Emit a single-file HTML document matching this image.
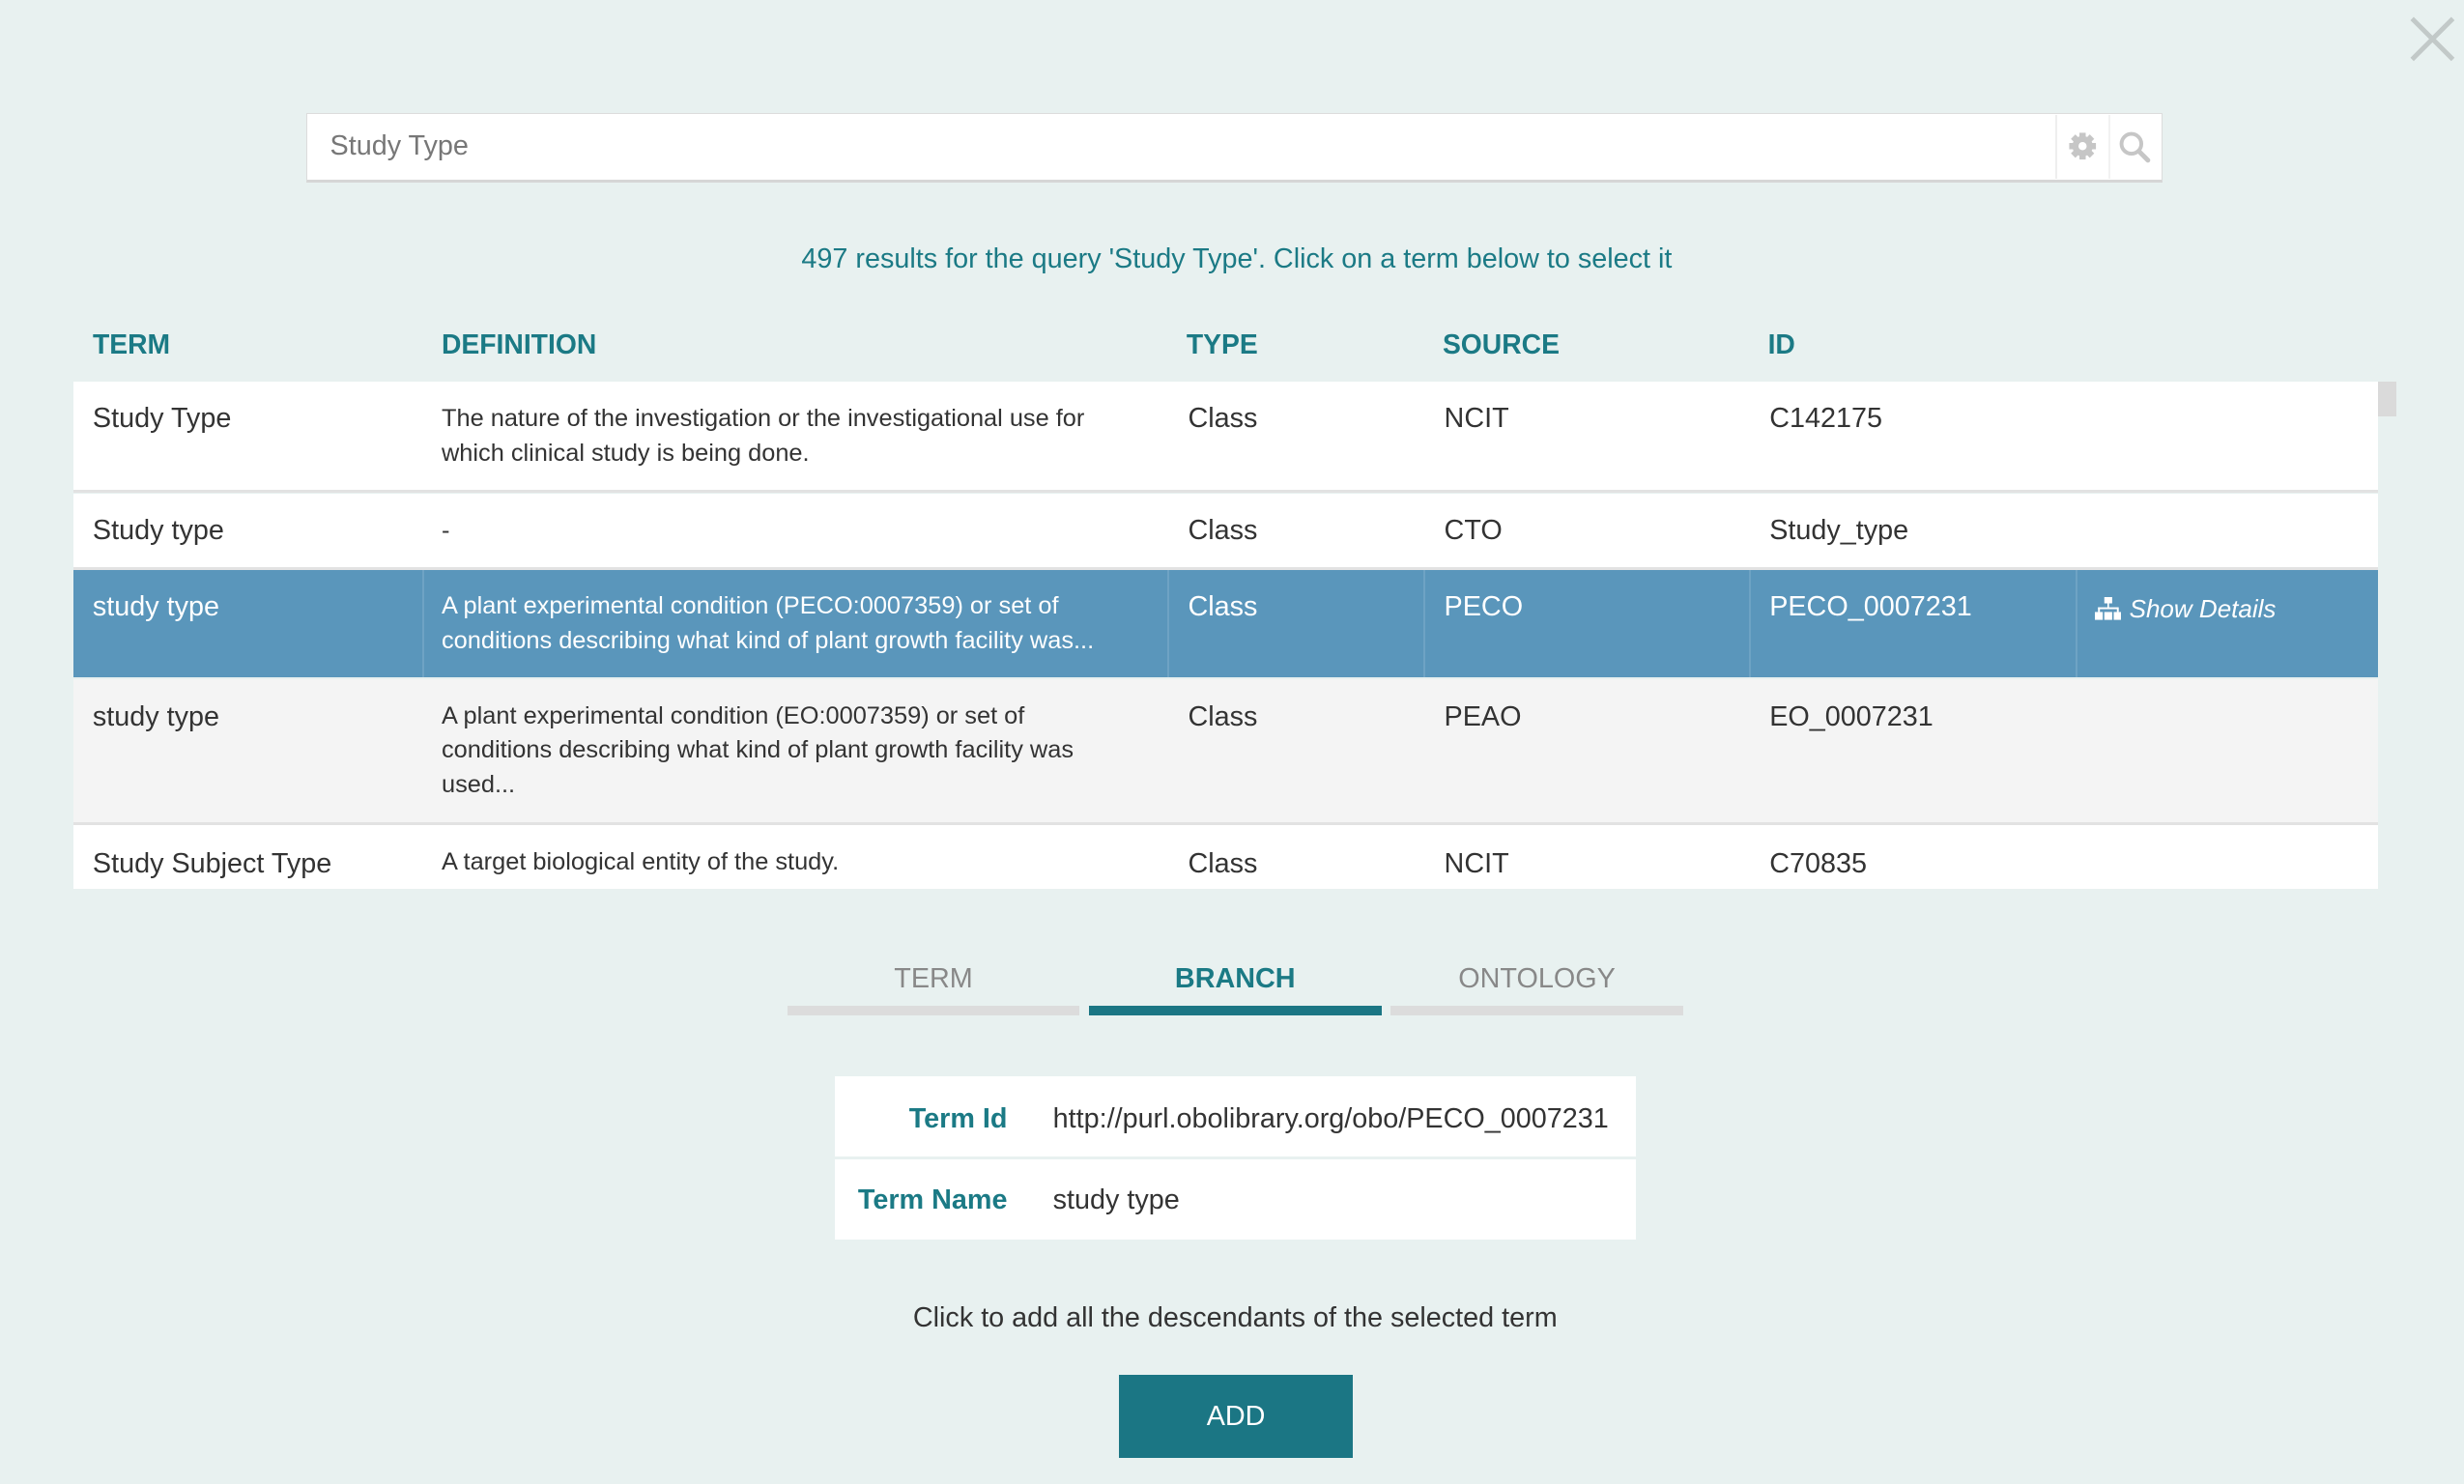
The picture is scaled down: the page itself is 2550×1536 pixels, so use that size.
<!DOCTYPE html>
<html><head><meta charset="utf-8"><style>
html,body{margin:0;padding:0;}
body{width:2550px;height:1536px;overflow:hidden;background:#e8f1f0;font-family:"Liberation Sans",Arial,sans-serif;}
#w{position:absolute;left:0;top:0;width:1568px;height:944px;zoom:1.6263;color:#333;}
.a{position:absolute;}
.h{position:absolute;top:209px;color:#1b7a85;font-weight:bold;font-size:17.4px;}
.row{position:absolute;left:47px;width:1466px;}
.c{position:absolute;font-size:17.7px;line-height:22px;}
.d{position:absolute;font-size:15.6px;line-height:22px;}
.sel .c,.sel .d{color:#fff;}
.vl{position:absolute;top:0;bottom:0;width:1px;background:#6ea3c4;}
</style></head><body><div id="w">
<svg class="a" style="left:1533px;top:10px" width="30" height="30" viewBox="0 0 30 30"><path d="M2 2L28 28M28 2L2 28" stroke="#c2c9c8" stroke-width="3"/></svg>
<div class="a" style="left:195px;top:72px;width:1180px;height:42px;background:#fff;border:1px solid #dcdcdc;border-bottom:2px solid #d6d6d6;"></div>
<div class="a" style="left:210px;top:83px;font-size:17.7px;color:#777;">Study Type</div>
<div class="a" style="left:1308px;top:73px;width:1px;height:41px;background:#eee"></div>
<div class="a" style="left:1342px;top:73px;width:1px;height:41px;background:#f2f2f2"></div>
<svg class="a" style="left:1315px;top:83px" width="20" height="20" viewBox="0 0 20 20"><g fill="#c6c6c6"><circle cx="10" cy="10" r="6.5"/><rect x="8" y="1.5" width="4" height="17"/><rect x="1.5" y="8" width="17" height="4"/><rect x="8" y="1.5" width="4" height="17" transform="rotate(45 10 10)"/><rect x="8" y="1.5" width="4" height="17" transform="rotate(-45 10 10)"/></g><circle cx="10" cy="10" r="2.6" fill="#fff"/></svg>
<svg class="a" style="left:1348px;top:83px" width="22" height="22" viewBox="0 0 22 22"><circle cx="8.5" cy="8.5" r="6.3" fill="none" stroke="#c6c6c6" stroke-width="2.4"/><path d="M13.5 13.5L19 19" stroke="#c6c6c6" stroke-width="3" stroke-linecap="round"/></svg>
<div class="a" style="left:0;width:1568px;top:155px;text-align:center;font-size:17.7px;color:#1b7a85;padding-left:3px;">497 results for the query 'Study Type'. Click on a term below to select it</div>
<div class="h" style="left:59px">TERM</div><div class="h" style="left:281px">DEFINITION</div><div class="h" style="left:755px">TYPE</div><div class="h" style="left:918px">SOURCE</div><div class="h" style="left:1125px">ID</div>
<div class="a" style="left:1513px;top:243px;width:12px;height:22px;background:#dadada"></div>

<div class="row" style="top:243px;height:69px;background:#fff;border-bottom:2px solid #e2e2e2">
<div class="c" style="left:12px;top:13px">Study Type</div>
<div class="d" style="left:234px;top:13px;width:425px">The nature of the investigation or the investigational use for which clinical study is being done.</div>
<div class="c" style="left:709px;top:13px">Class</div><div class="c" style="left:872px;top:13px">NCIT</div><div class="c" style="left:1079px;top:13px">C142175</div></div>

<div class="row" style="top:314px;height:47px;background:#fff;border-bottom:2px solid #e2e2e2">
<div class="c" style="left:12px;top:13px">Study type</div><div class="d" style="left:234px;top:13px">-</div>
<div class="c" style="left:709px;top:13px">Class</div><div class="c" style="left:872px;top:13px">CTO</div><div class="c" style="left:1079px;top:13px">Study_type</div></div>

<div class="row sel" style="top:363px;height:68px;background:#5a96bb;">
<div class="vl" style="left:222px"></div><div class="vl" style="left:696px"></div><div class="vl" style="left:859px"></div><div class="vl" style="left:1066px"></div><div class="vl" style="left:1274px"></div>
<div class="c" style="left:12px;top:13px">study type</div>
<div class="d" style="left:234px;top:12px;width:432px">A plant experimental condition (PECO:0007359) or set of conditions describing what kind of plant growth facility was...</div>
<div class="c" style="left:709px;top:13px">Class</div><div class="c" style="left:872px;top:13px">PECO</div><div class="c" style="left:1079px;top:13px">PECO_0007231</div>
<svg class="a" style="left:1286px;top:17px" width="17" height="15" viewBox="0 0 17 15"><g fill="#fff"><rect x="6" y="0" width="5" height="4"/><rect x="8" y="4" width="1" height="3"/><rect x="2" y="6.5" width="13" height="1.2"/><rect x="2" y="6.5" width="1.2" height="3"/><rect x="14" y="6.5" width="1.2" height="3"/><rect x="0" y="9.5" width="5" height="5"/><rect x="6" y="9.5" width="5" height="5"/><rect x="12" y="9.5" width="5" height="5"/></g></svg>
<div class="d" style="left:1308px;top:14px;font-style:italic;font-size:16px">Show Details</div></div>

<div class="row" style="top:432px;height:91px;background:#f4f4f4;border-bottom:2px solid #e2e2e2">
<div class="c" style="left:12px;top:14px">study type</div>
<div class="d" style="left:234px;top:13px;width:425px">A plant experimental condition (EO:0007359) or set of conditions describing what kind of plant growth facility was used...</div>
<div class="c" style="left:709px;top:14px">Class</div><div class="c" style="left:872px;top:14px">PEAO</div><div class="c" style="left:1079px;top:14px">EO_0007231</div></div>

<div class="row" style="top:525px;height:41px;background:#fff;overflow:hidden">
<div class="c" style="left:12px;top:14px">Study Subject Type</div><div class="d" style="left:234px;top:13px">A target biological entity of the study.</div>
<div class="c" style="left:709px;top:14px">Class</div><div class="c" style="left:872px;top:14px">NCIT</div><div class="c" style="left:1079px;top:14px">C70835</div></div>

<div class="a" style="left:501px;top:613px;width:186px;text-align:center;font-size:17.7px;color:#888">TERM</div>
<div class="a" style="left:693px;top:613px;width:186px;text-align:center;font-size:17.7px;color:#1b7a85;font-weight:bold">BRANCH</div>
<div class="a" style="left:885px;top:613px;width:186px;text-align:center;font-size:17.7px;color:#888">ONTOLOGY</div>
<div class="a" style="left:501px;top:640px;width:186px;height:6px;background:#dcdcdc"></div>
<div class="a" style="left:693px;top:640px;width:186px;height:6px;background:#1b7684"></div>
<div class="a" style="left:885px;top:640px;width:186px;height:6px;background:#dcdcdc"></div>

<div class="a" style="left:531px;top:685px;width:510px;height:51px;background:#fff"></div>
<div class="a" style="left:531px;top:738px;width:510px;height:51px;background:#fff"></div>
<div class="a" style="left:531px;top:702px;width:110px;text-align:right;font-size:17.7px;font-weight:bold;color:#1b7a85">Term Id</div>
<div class="a" style="left:670px;top:702px;font-size:17.7px">http://purl.obolibrary.org/obo/PECO_0007231</div>
<div class="a" style="left:531px;top:754px;width:110px;text-align:right;font-size:17.7px;font-weight:bold;color:#1b7a85;white-space:nowrap">Term Name</div>
<div class="a" style="left:670px;top:754px;font-size:17.7px">study type</div>
<div class="a" style="left:0;width:1572px;top:829px;text-align:center;font-size:17.7px">Click to add all the descendants of the selected term</div>
<div class="a" style="left:712px;top:875px;width:149px;height:53px;background:#1b7684;color:#fff;font-size:17.7px;text-align:center;line-height:53px">ADD</div>
</div></body></html>
